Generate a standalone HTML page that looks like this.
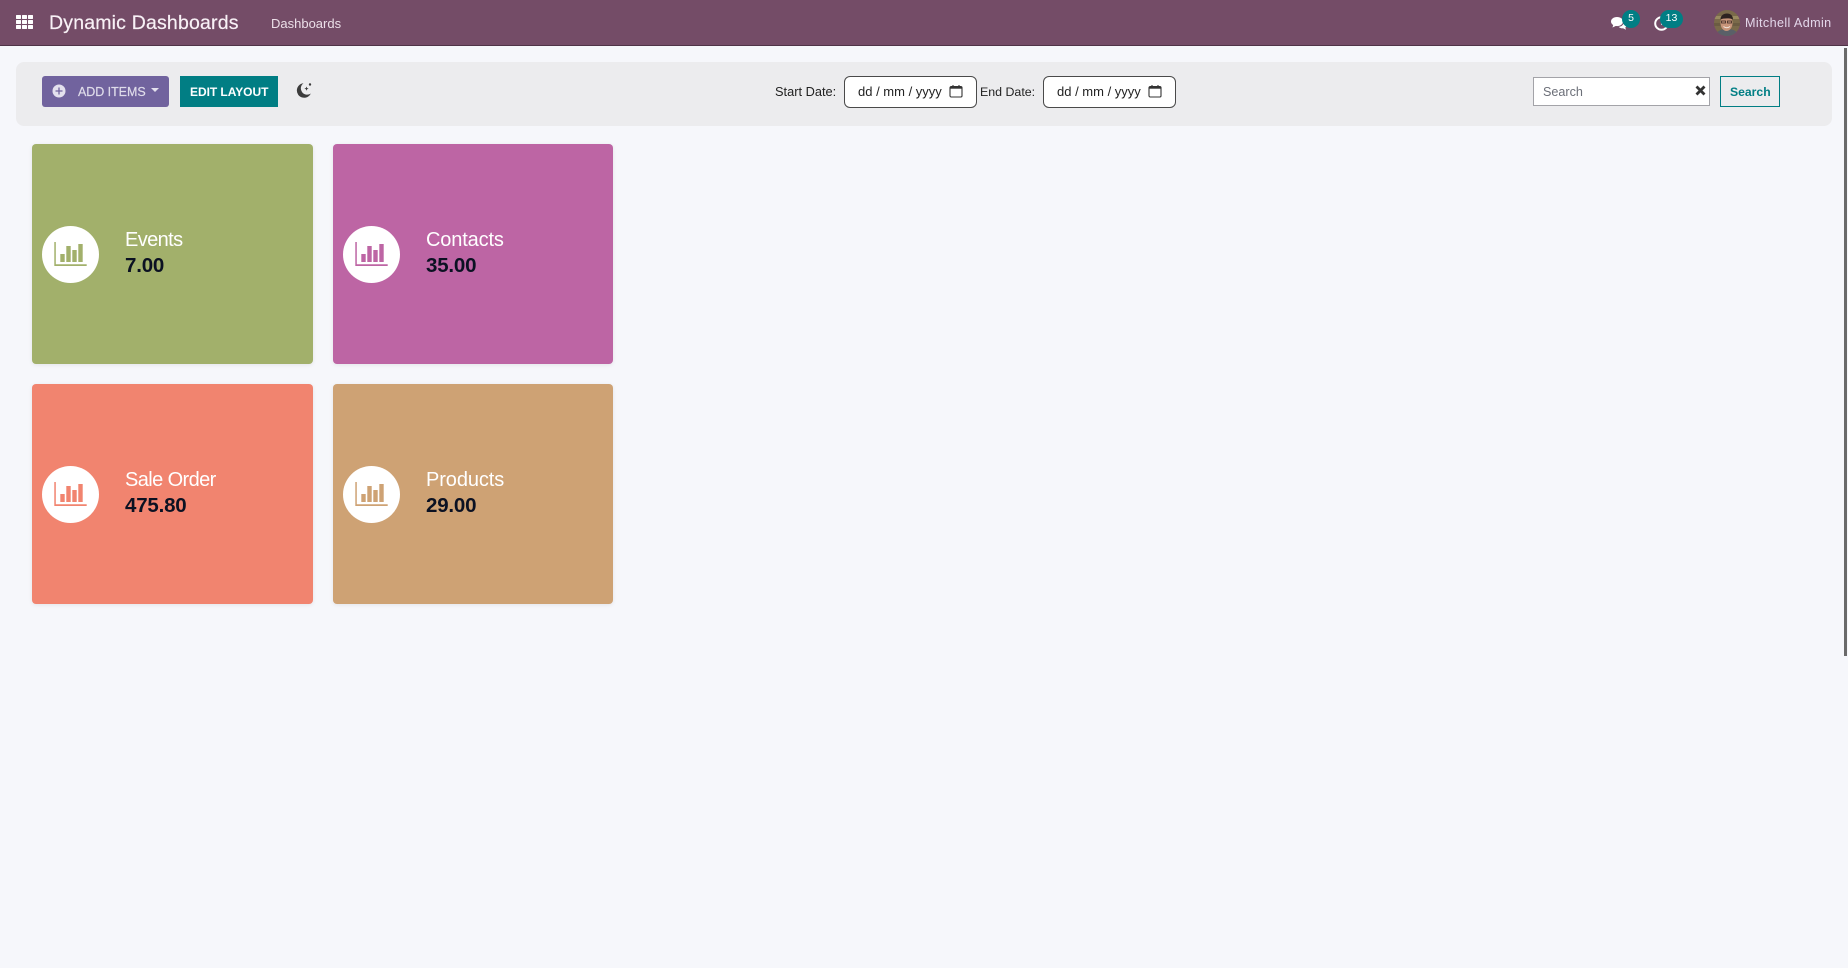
<!DOCTYPE html>
<html><head><meta charset="utf-8"><style>
html,body{margin:0;padding:0;width:1848px;height:968px;overflow:hidden;background:#f6f7fb;font-family:"Liberation Sans",sans-serif;}
*{box-sizing:border-box}
.a{position:absolute}
.t{position:absolute;white-space:nowrap;line-height:1}
.card{position:absolute;width:281px;height:220px;border-radius:4px;box-shadow:0 1px 4px rgba(0,0,0,.08)}
.circ{position:absolute;left:10px;top:82px;width:57px;height:57px;border-radius:50%;background:#fff}
.circ svg{position:absolute;left:12px;top:15px}
.h{position:absolute;left:93px;top:86px;font-size:20px;letter-spacing:-.6px;color:#fff;line-height:1;white-space:nowrap}
.v{position:absolute;left:93px;top:112px;font-size:20.5px;letter-spacing:-.2px;font-weight:bold;color:#0b1122;line-height:1;white-space:nowrap}
.date{position:absolute;top:76px;width:133px;height:32px;border:1px solid #4a4a4a;border-radius:6px;background:#fff;font-size:13px;color:#222}
.date span{position:absolute;left:13px;top:8px;line-height:1;white-space:nowrap}
.date svg{position:absolute;left:104px;top:7px}
.badge{position:absolute;background:#017e84;border-radius:10px;color:#fff;font-size:10.5px;text-align:center;line-height:17px;height:18px}
</style></head><body>
<div class="a" style="left:0;top:0;width:1848px;height:46px;background:#744c67;border-bottom:1px solid #4f3347"></div>
<svg class="a" style="left:16px;top:15px" width="17" height="14" viewBox="0 0 17 14"><g fill="#fff"><rect x="0" y="0" width="5" height="4" rx=".6"/><rect x="6" y="0" width="5" height="4" rx=".6"/><rect x="12" y="0" width="5" height="4" rx=".6"/><rect x="0" y="5" width="5" height="4" rx=".6"/><rect x="6" y="5" width="5" height="4" rx=".6"/><rect x="12" y="5" width="5" height="4" rx=".6"/><rect x="0" y="10" width="5" height="4" rx=".6"/><rect x="6" y="10" width="5" height="4" rx=".6"/><rect x="12" y="10" width="5" height="4" rx=".6"/></g></svg>
<div class="t" style="left:49px;top:14px;font-size:19.5px;color:#f8f1f6;letter-spacing:.18px;-webkit-text-stroke:.2px #f8f1f6">Dynamic Dashboards</div>
<div class="t" style="left:271px;top:17px;font-size:13px;color:#ecdfe8">Dashboards</div>

<svg class="a" style="left:1610px;top:15px" width="18" height="16" viewBox="0 0 18 16"><path d="M7 2C3.500 2 1 4 1 6.500c0 1.500 .9 2.700 2.200 3.500L2.500 12.500 5.700 11c.4 0 .9.100 1.300.100 3.500 0 6-2 6-4.600S10.500 2 7 2z" fill="#fff"/><path d="M14 6.500c2 .6 3 1.900 3 3.300 0 1.100-.7 2-1.700 2.700l.7 2.300-3-1.500c-1.500.2-3.500-.3-4.500-1.500 3 0 5.500-2.200 5.500-5.300z" fill="#fff"/></svg>
<div class="badge" style="left:1622px;top:10px;width:18px">5</div>
<svg class="a" style="left:1654px;top:16px" width="15" height="15" viewBox="0 0 15 15"><path d="M7.500 1.200a6.300 6.300 0 1 0 6.300 6.300" fill="none" stroke="#fff" stroke-width="2"/><path d="M7 8h3.500" stroke="#fff" stroke-width="1.600"/></svg>
<div class="badge" style="left:1660px;top:10px;width:23px">13</div>
<svg class="a" style="left:1714px;top:10px" width="26" height="26" viewBox="0 0 26 26"><defs><clipPath id="av"><circle cx="13" cy="13" r="13"/></clipPath></defs><g clip-path="url(#av)"><rect width="26" height="26" fill="#7a6a4a"/><rect x="0" y="6" width="26" height="3" fill="#998a60"/><rect x="0" y="13" width="26" height="3" fill="#6b5c42"/><path d="M2 26c0-5 5-7 11-7s11 2 11 7z" fill="#5a6068"/><ellipse cx="12.500" cy="13" rx="6" ry="8" fill="#c8957a"/><path d="M6.500 9.500c0-4 3-6 6.500-6S19 5.500 19 9.500c-2-1.500-10-1.500-12.500 0z" fill="#2e2320"/><path d="M7.500 11h4v2h-4zM13.500 11h4v2h-4z" fill="none" stroke="#3a2a24" stroke-width=".8"/><path d="M9.500 16.500c2 1.500 4.500 1.500 6.500 0" stroke="#f3e8e0" stroke-width="1" fill="none"/></g></svg>
<div class="t" style="left:1745px;top:17px;font-size:12.6px;color:#e3d7ea;letter-spacing:.38px">Mitchell Admin</div>

<div class="a" style="left:16px;top:62px;width:1816px;height:64px;background:#ececee;border-radius:8px"></div>
<div class="a" style="left:42px;top:76px;width:127px;height:31px;background:#71639e;border-radius:3px"></div>
<svg class="a" style="left:52px;top:84px" width="14" height="14" viewBox="0 0 14 14"><circle cx="7" cy="7" r="6.500" fill="#e4e1ee"/><path d="M7 3.500v7M3.500 7h7" stroke="#71639e" stroke-width="1.300"/></svg>
<div class="t" style="left:78px;top:86px;font-size:12.5px;color:#dfdcea;letter-spacing:-.05px;-webkit-text-stroke:.2px #dfdcea">ADD ITEMS</div>
<div class="a" style="left:151px;top:88px;width:0;height:0;border-left:4px solid transparent;border-right:4px solid transparent;border-top:4px solid #e4e1ee"></div>
<div class="a" style="left:180px;top:76px;width:98px;height:31px;background:#017e84"></div>
<div class="t" style="left:190px;top:86px;font-size:12px;font-weight:bold;color:#fff;letter-spacing:-.05px">EDIT LAYOUT</div>
<svg class="a" style="left:295px;top:81px" width="18" height="18" viewBox="0 0 18 18"><path d="M8.500 2.200A7.300 7.300 0 1 0 15.800 12.500 6.300 6.300 0 0 1 8.500 2.200z" fill="#3c3c3c"/><path d="M11.500 5.500l.6 1.500 1.500.6-1.500.6-.6 1.500-.6-1.500-1.500-.6 1.500-.6z" fill="#3c3c3c"/><circle cx="15" cy="3.500" r="1.200" fill="#3c3c3c"/></svg>

<div class="t" style="left:775px;top:86px;font-size:12.8px;color:#222">Start Date:</div>
<div class="date" style="left:844px"><span>dd / mm / yyyy</span><svg width="14" height="14" viewBox="0 0 14 14"><rect x="1" y="2.500" width="12" height="10.500" rx="1.200" fill="none" stroke="#333" stroke-width="1.100"/><rect x="1" y="2.500" width="12" height="2.200" fill="#333"/><path d="M4 1v2M10 1v2" stroke="#333" stroke-width="1.100"/></svg></div>
<div class="t" style="left:980px;top:86px;font-size:12.4px;color:#222">End Date:</div>
<div class="date" style="left:1043px"><span>dd / mm / yyyy</span><svg width="14" height="14" viewBox="0 0 14 14"><rect x="1" y="2.500" width="12" height="10.500" rx="1.200" fill="none" stroke="#333" stroke-width="1.100"/><rect x="1" y="2.500" width="12" height="2.200" fill="#333"/><path d="M4 1v2M10 1v2" stroke="#333" stroke-width="1.100"/></svg></div>

<div class="a" style="left:1533px;top:77px;width:177px;height:29px;background:#fff;border:1px solid #a3a3a8"></div>
<div class="t" style="left:1543px;top:86px;font-size:12.6px;color:#6c6f78">Search</div>
<svg class="a" style="left:1695px;top:85px" width="11" height="11" viewBox="0 0 11 11"><path d="M1.500 1.500l8 8M9.500 1.500l-8 8" stroke="#333" stroke-width="2.800"/></svg>
<div class="a" style="left:1720px;top:76px;width:60px;height:31px;border:1px solid #017e84"></div>
<div class="t" style="left:1730px;top:86px;font-size:12.2px;font-weight:bold;color:#017e84">Search</div>

<div class="a" style="left:1844px;top:48px;width:3px;height:608px;background:#6a6a6a"></div>

<div class="card" style="left:32px;top:144px;background:#a2b06b"><div class="circ"><svg width="33" height="25" viewBox="0 0 33 25" fill="#a2b06b"><path d="M.3 1h1.500v22.300H32.700V25H.3z"/><rect x="6.300" y="13" width="4.400" height="8"/><rect x="12.300" y="5" width="4.400" height="16"/><rect x="18.300" y="9" width="4.400" height="12"/><rect x="24.300" y="3" width="4.400" height="18"/></svg></div><div class="h">Events</div><div class="v">7.00</div></div>
<div class="card" style="left:333px;top:144px;width:280px;background:#bd65a4"><div class="circ"><svg width="33" height="25" viewBox="0 0 33 25" fill="#bd65a4"><path d="M.3 1h1.500v22.300H32.700V25H.3z"/><rect x="6.300" y="13" width="4.400" height="8"/><rect x="12.300" y="5" width="4.400" height="16"/><rect x="18.300" y="9" width="4.400" height="12"/><rect x="24.300" y="3" width="4.400" height="18"/></svg></div><div class="h" style="letter-spacing:-.15px">Contacts</div><div class="v">35.00</div></div>
<div class="card" style="left:32px;top:384px;background:#f1846f"><div class="circ"><svg width="33" height="25" viewBox="0 0 33 25" fill="#f1846f"><path d="M.3 1h1.500v22.300H32.700V25H.3z"/><rect x="6.300" y="13" width="4.400" height="8"/><rect x="12.300" y="5" width="4.400" height="16"/><rect x="18.300" y="9" width="4.400" height="12"/><rect x="24.300" y="3" width="4.400" height="18"/></svg></div><div class="h">Sale Order</div><div class="v">475.80</div></div>
<div class="card" style="left:333px;top:384px;width:280px;background:#cea274"><div class="circ"><svg width="33" height="25" viewBox="0 0 33 25" fill="#cea274"><path d="M.3 1h1.500v22.300H32.700V25H.3z"/><rect x="6.300" y="13" width="4.400" height="8"/><rect x="12.300" y="5" width="4.400" height="16"/><rect x="18.300" y="9" width="4.400" height="12"/><rect x="24.300" y="3" width="4.400" height="18"/></svg></div><div class="h" style="letter-spacing:-.1px">Products</div><div class="v">29.00</div></div>
</body></html>
